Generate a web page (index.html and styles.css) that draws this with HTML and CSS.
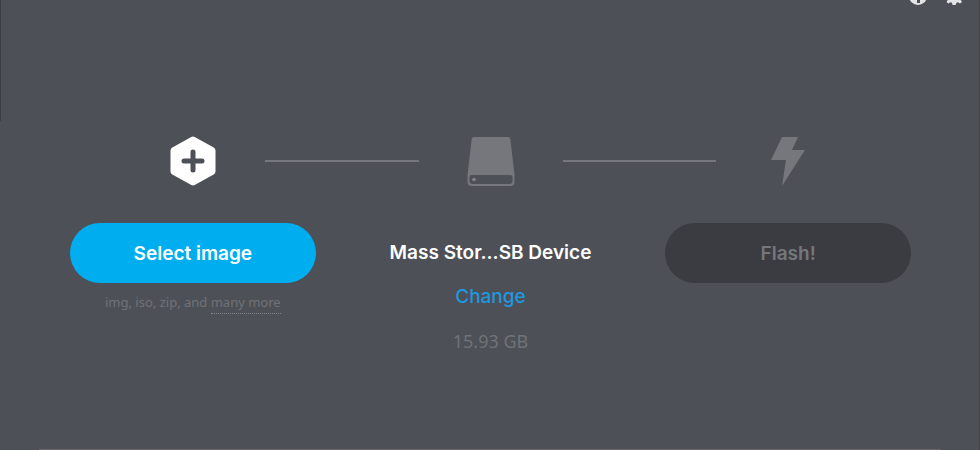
FILE: index.html
```html
<!DOCTYPE html>
<html lang="en">
<head>
<meta charset="utf-8">
<title>Flash an image</title>
<link rel="stylesheet" href="styles.css">
</head>
<body>
<header class="toolbar">
  <button class="tool" aria-label="Help">
    <svg width="18" height="18" viewBox="0 0 18 18"><circle cx="9" cy="9" r="9" fill="#e3e4e5"/><path d="M6 6a3 3 0 1 1 4 3l-1 1v1" fill="none" stroke="#4d5057" stroke-width="2"/><rect x="8" y="13" width="3" height="3" fill="#4d5057"/></svg>
  </button>
  <button class="tool" aria-label="Settings">
    <svg width="18" height="18" viewBox="0 0 18 18"><path fill="#e3e4e5" fill-rule="evenodd" d="M7 0h4l.5 2.700 1.500.6L15.300 2l1.700 2-1.500 2.300.7 1.200 1.800.5v3l-1.800.5-.5 1.500 1.300 2-2 1.500-2-1.300-1.500.6L10.500 18h-3L7 15.800l-1.500-.6-2 1.300-2-1.500 1.300-2-.5-1.500L0 11V8l2.300-.5.5-1.200L1.500 4l1.700-2 2 1.300L6.500 2.700zM9 6a3 3 0 1 0 0 6 3 3 0 0 0 0-6z"/></svg>
  </button>
</header>
<main class="flasher">
  <div class="steps">
    <svg class="step-icon" viewBox="0 0 48 50" aria-hidden="true"><path d="M24 4 43 14.500v21L24 46 5 35.500v-21z" fill="#fff" stroke="#fff" stroke-width="7" stroke-linejoin="round"/><path d="M24 16v18M15 25h18" stroke="#4d5057" stroke-width="5" stroke-linecap="round"/></svg>
    <span class="connector"></span>
    <svg class="step-icon" viewBox="0 0 48 50" aria-hidden="true"><path fill="#75777c" fill-rule="evenodd" d="M7 1h34q2 0 2.300 2L47.500 39v7q0 4-4 4h-39q-4 0-4-4v-7L4.700 3Q5 1 7 1zM4.500 39q-2 0-2 2v4q0 3 3 3h37q3 0 3-3v-4q0-2-2-2z"/><circle cx="7" cy="43.500" r="1.700" fill="#85878b"/></svg>
    <span class="connector"></span>
    <svg class="step-icon" viewBox="0 0 48 50" aria-hidden="true"><path fill="#75777c" d="M18 1h16l-6 13h13L18 50l4-26H7z"/></svg>
  </div>
  <div class="columns">
    <section class="column">
      <button class="action primary">Select image</button>
      <p class="formats">img, iso, zip, and <a class="more" href="#formats">many more</a></p>
    </section>
    <section class="column">
      <h1 class="device">Mass Stor...SB Device</h1>
      <button class="change">Change</button>
      <p class="capacity">15.93 GB</p>
    </section>
    <section class="column">
      <button class="action flash" disabled>Flash!</button>
    </section>
  </div>
</main>
</body>
</html>
```
FILE: styles.css
```css
* {
  box-sizing: border-box;
}

body {
  margin: 0;
  min-height: 100vh;
  background:
    linear-gradient(#3d3e42, #3d3e42) left top / 1px 121px no-repeat,
    linear-gradient(#404247, #404247) right top / 1px 100% no-repeat,
    linear-gradient(#66666b, #66666b) center bottom / 92% 1px no-repeat,
    #4d5057;
  color: #fff;
  font-family: Inter, "Liberation Sans", sans-serif;
}

button {
  border: 0;
  padding: 0;
  background: none;
  font: inherit;
}

.toolbar {
  display: flex;
  justify-content: flex-end;
  align-items: flex-end;
  gap: 18px;
  height: 5px;
  padding-right: 17px;
  overflow: hidden;
}

.tool {
  display: block;
  height: 18px;
}

.tool svg {
  display: block;
}

.flasher {
  padding: 131px 69px 0 70px;
}

.steps {
  display: flex;
  align-items: center;
  gap: 48px;
  margin: 0 99px;
}

.step-icon {
  flex: none;
  width: 48px;
  height: 50px;
}

.connector {
  flex: 1;
  height: 2px;
  background: #75777c;
}

.columns {
  display: grid;
  grid-template-columns: repeat(3, 1fr);
  gap: 52px;
  margin-top: 37px;
  text-align: center;
}

.action {
  display: block;
  width: 100%;
  height: 60px;
  border-radius: 30px;
  font-size: 19px;
  font-weight: 600;
}

.primary {
  background: #00aeef;
  color: #fff;
}

.flash {
  background: #3b3c41;
  color: #75777c;
}

.formats {
  margin: 8px 0 0;
  color: #707277;
  font: 13px/20px "Noto Sans", sans-serif;
}

.more {
  display: inline-block;
  border-bottom: 1px dotted #85878b;
  color: inherit;
  line-height: 22px;
  text-decoration: none;
}

.device {
  margin: 0;
  font-size: 19px;
  font-weight: 600;
  line-height: 60px;
  white-space: nowrap;
}

.change {
  color: #2297de;
  font-size: 19px;
  font-weight: 500;
  line-height: 28px;
}

.capacity {
  margin: 16px 0 0;
  color: #707277;
  font: 18px/28px "Noto Sans", sans-serif;
}
```
